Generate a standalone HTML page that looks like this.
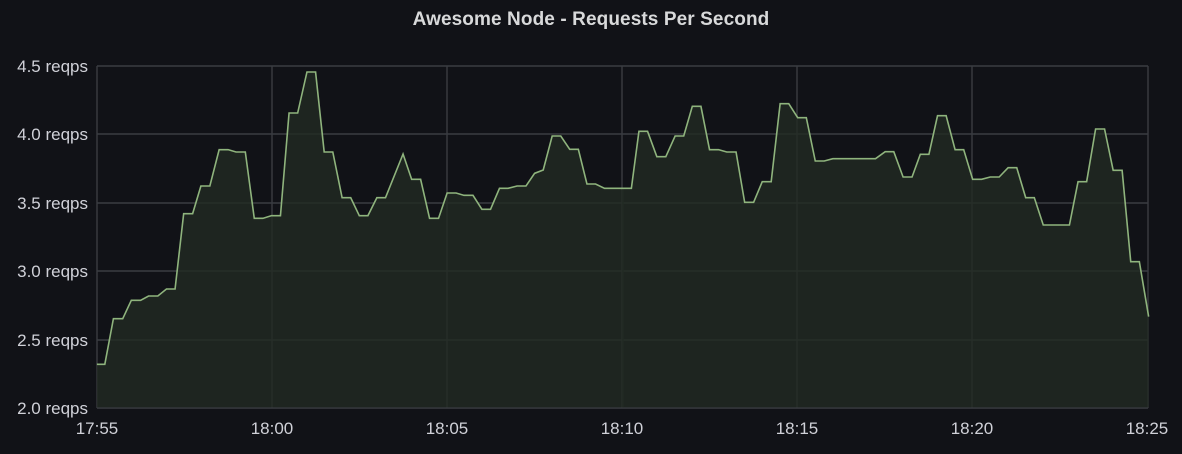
<!DOCTYPE html>
<html><head><meta charset="utf-8"><style>
html,body{margin:0;padding:0;background:#111217;}
body{width:1182px;height:454px;overflow:hidden;position:relative;font-family:"Liberation Sans",sans-serif;}
.t{position:absolute;left:0;width:1182px;top:9px;text-align:center;color:#d8d9da;font-size:19px;font-weight:bold;letter-spacing:0.1px;}
.y{position:absolute;right:1094px;color:#d0d1d8;font-size:17px;white-space:nowrap;}
.x{position:absolute;top:419px;color:#d0d1d8;font-size:17px;width:60px;margin-left:-30px;text-align:center;}
</style></head><body>
<div class="t">Awesome Node - Requests Per Second</div>
<svg width="1182" height="454" style="position:absolute;left:0;top:0">
<g stroke="#3a3c42" stroke-width="1.4" fill="none">
<line x1="97" y1="66" x2="1148" y2="66"/><line x1="97" y1="134" x2="1148" y2="134"/>
<line x1="97" y1="203" x2="1148" y2="203"/><line x1="97" y1="271" x2="1148" y2="271"/>
<line x1="97" y1="340" x2="1148" y2="340"/><line x1="97" y1="408" x2="1148" y2="408"/>
<line x1="97" y1="66" x2="97" y2="408"/><line x1="272" y1="66" x2="272" y2="408"/>
<line x1="447" y1="66" x2="447" y2="408"/><line x1="622" y1="66" x2="622" y2="408"/>
<line x1="797" y1="66" x2="797" y2="408"/><line x1="972" y1="66" x2="972" y2="408"/>
<line x1="1148" y1="66" x2="1148" y2="408"/>
</g>
<g transform="translate(90,50) scale(0.34439,0.33333)">
<polygon fill="#222a23" fill-opacity="0.8" points="20,1072 20,943 43,943 68,806 95,806 120,751 147,751 170,738 197,738 222,717 247,717 272,491 298,491 322,408 348,408 375,299 401,299 424,306 451,306 477,505 502,505 527,497 553,497 578,189 603,189 630,66 655,66 680,306 705,306 732,443 757,443 782,497 807,497 833,443 858,443 909,312 934,388 960,388 986,505 1012,505 1037,429 1063,429 1086,436 1112,436 1138,478 1163,478 1189,415 1214,415 1240,408 1266,408 1291,370 1316,360 1342,258 1367,258 1393,298 1418,298 1443,402 1468,402 1494,415 1520,415 1550,415 1550,1072"/>
<polyline fill="none" stroke="#8fb47d" stroke-width="1.6" vector-effect="non-scaling-stroke" points="20,943 43,943 68,806 95,806 120,751 147,751 170,738 197,738 222,717 247,717 272,491 298,491 322,408 348,408 375,299 401,299 424,306 451,306 477,505 502,505 527,497 553,497 578,189 603,189 630,66 655,66 680,306 705,306 732,443 757,443 782,497 807,497 833,443 858,443 909,312 934,388 960,388 986,505 1012,505 1037,429 1063,429 1086,436 1112,436 1138,478 1163,478 1189,415 1214,415 1240,408 1266,408 1291,370 1316,360 1342,258 1367,258 1393,298 1418,298 1443,402 1468,402 1494,415 1520,415 1550,415"/>
</g>
<g transform="translate(620,50) scale(0.34439,0.33333)">
<polygon fill="#222a23" fill-opacity="0.8" points="6,1072 6,415 33,415 55,244 80,244 107,320 133,320 160,258 185,258 210,169 235,169 260,299 286,299 310,306 337,306 362,457 388,457 413,395 439,395 465,161 490,161 516,203 541,203 567,333 593,333 618,326 742,326 770,305 795,305 822,381 848,381 872,313 897,313 922,197 947,197 973,299 998,299 1024,388 1050,388 1075,381 1101,381 1127,353 1152,353 1178,443 1203,443 1229,525 1305,525 1330,395 1355,395 1381,237 1407,237 1432,361 1458,361 1483,635 1508,635 1535,800 1535,1072"/>
<polyline fill="none" stroke="#8fb47d" stroke-width="1.6" vector-effect="non-scaling-stroke" points="4,415 33,415 55,244 80,244 107,320 133,320 160,258 185,258 210,169 235,169 260,299 286,299 310,306 337,306 362,457 388,457 413,395 439,395 465,161 490,161 516,203 541,203 567,333 593,333 618,326 742,326 770,305 795,305 822,381 848,381 872,313 897,313 922,197 947,197 973,299 998,299 1024,388 1050,388 1075,381 1101,381 1127,353 1152,353 1178,443 1203,443 1229,525 1305,525 1330,395 1355,395 1381,237 1407,237 1432,361 1458,361 1483,635 1508,635 1535,800"/>
</g>
</svg>
<div class="y" style="top:57px">4.5 reqps</div>
<div class="y" style="top:125px">4.0 reqps</div>
<div class="y" style="top:194px">3.5 reqps</div>
<div class="y" style="top:262px">3.0 reqps</div>
<div class="y" style="top:331px">2.5 reqps</div>
<div class="y" style="top:399px">2.0 reqps</div>
<div class="x" style="left:97px">17:55</div>
<div class="x" style="left:272px">18:00</div>
<div class="x" style="left:447px">18:05</div>
<div class="x" style="left:622px">18:10</div>
<div class="x" style="left:797px">18:15</div>
<div class="x" style="left:972px">18:20</div>
<div class="x" style="left:1147px">18:25</div>
</body></html>
